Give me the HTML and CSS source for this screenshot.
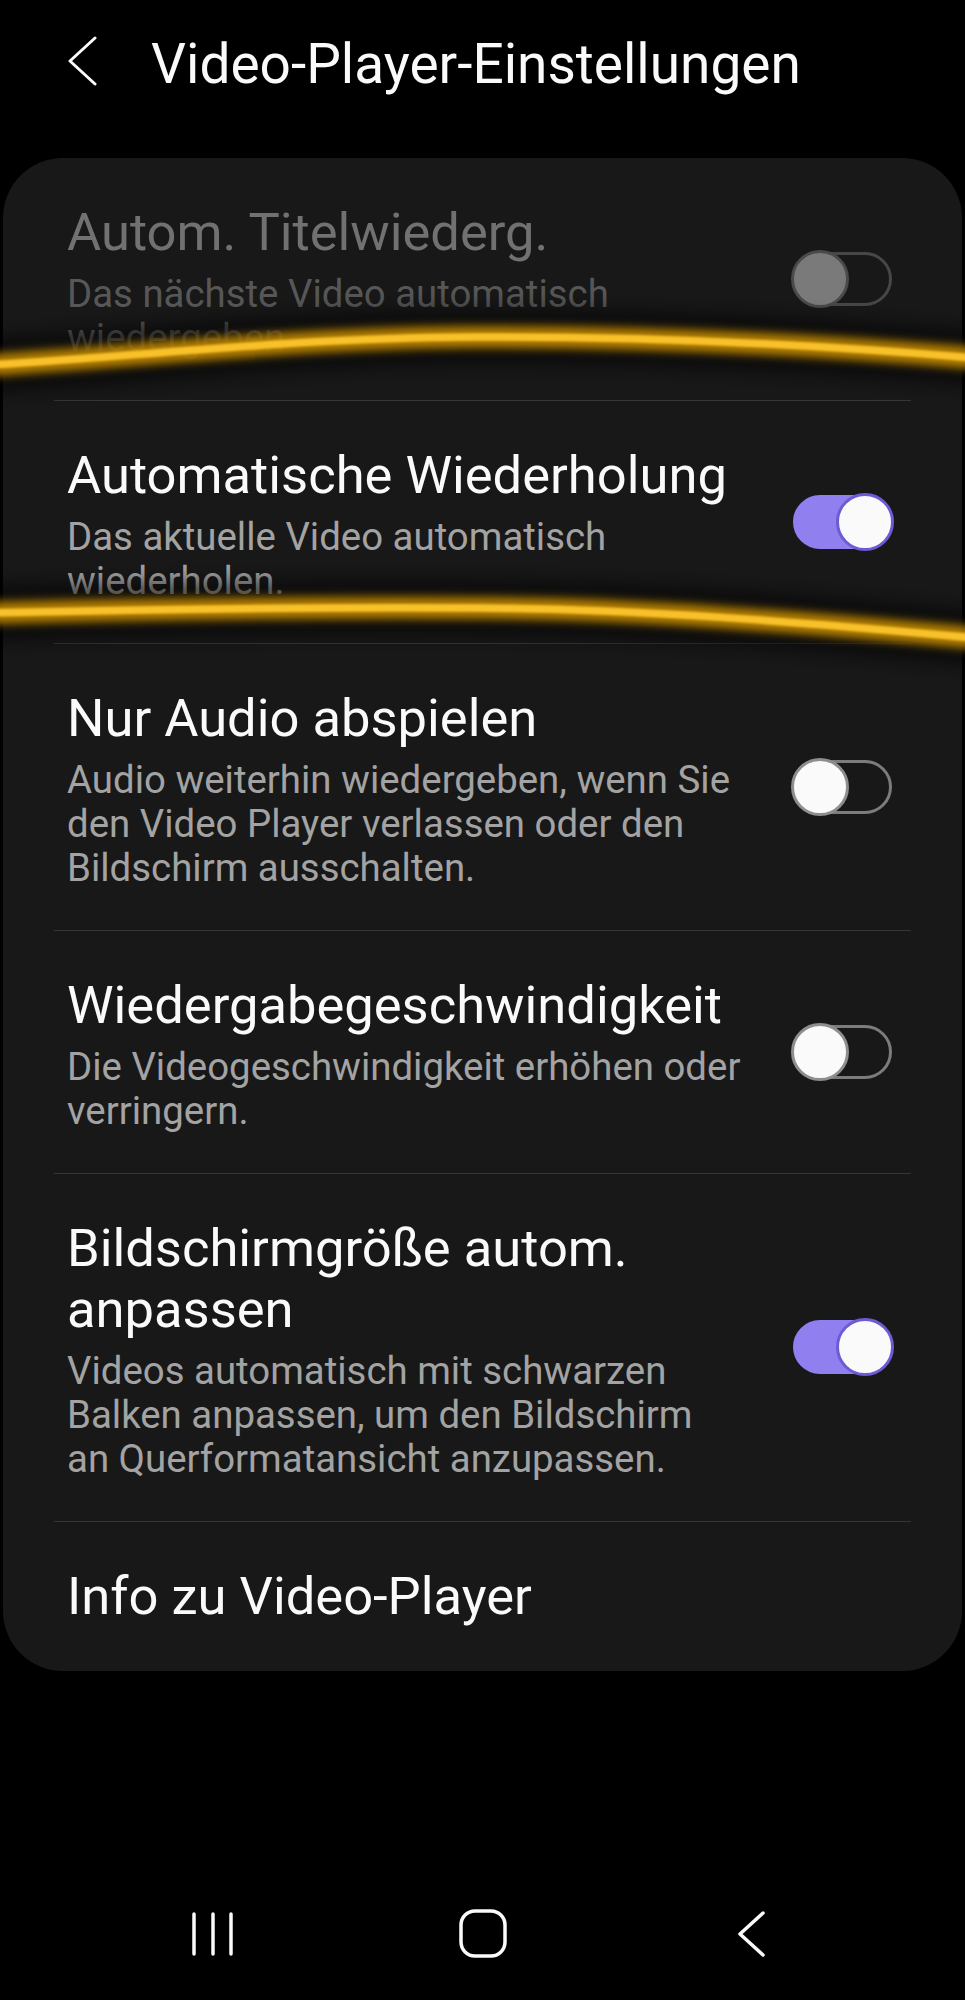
FILE: index.html
```html
<!DOCTYPE html>
<html lang="de">
<head>
<meta charset="utf-8">
<title>Video-Player-Einstellungen</title>
<link rel="stylesheet" href="styles.css">
</head>
<body>
<div class="screen">
  <header class="topbar">
    <svg class="back" width="32" height="50" viewBox="0 0 32 50" aria-hidden="true">
      <path d="M29 2 L4 25 L29 48" fill="none" stroke="#fafafa" stroke-width="3" stroke-linecap="round" stroke-linejoin="round"/>
    </svg>
    <h1 class="page-title">Video-Player-Einstellungen</h1>
  </header>

  <section class="card">
    <div class="item is-disabled">
      <div class="text">
        <div class="title">Autom. Titelwiederg.</div>
        <div class="sub">Das nächste Video automatisch wiedergeben</div>
      </div>
      <div class="switch"><span class="knob"></span></div>
    </div>
    <div class="item">
      <div class="text">
        <div class="title">Automatische Wiederholung</div>
        <div class="sub">Das aktuelle Video automatisch wiederholen.</div>
      </div>
      <div class="switch is-on"><span class="knob"></span></div>
    </div>
    <div class="item">
      <div class="text">
        <div class="title">Nur Audio abspielen</div>
        <div class="sub">Audio weiterhin wiedergeben, wenn Sie den Video Player verlassen oder den Bildschirm ausschalten.</div>
      </div>
      <div class="switch"><span class="knob"></span></div>
    </div>
    <div class="item">
      <div class="text">
        <div class="title">Wiedergabegeschwindigkeit</div>
        <div class="sub">Die Videogeschwindigkeit erhöhen oder verringern.</div>
      </div>
      <div class="switch"><span class="knob"></span></div>
    </div>
    <div class="item">
      <div class="text">
        <div class="title">Bildschirmgröße autom. anpassen</div>
        <div class="sub">Videos automatisch mit schwarzen Balken anpassen, um den Bildschirm <span class="keep">an Querformatansicht</span> anzupassen.</div>
      </div>
      <div class="switch is-on"><span class="knob"></span></div>
    </div>
    <div class="item">
      <div class="text">
        <div class="title">Info zu Video-Player</div>
      </div>
    </div>
  </section>

  <div class="spacer"></div>

  <nav class="navbar">
    <svg class="nav-icon" width="60" height="60" viewBox="0 0 60 60" aria-hidden="true">
      <g stroke="#fafafa" stroke-width="3.5" stroke-linecap="round">
        <line x1="11" y1="10" x2="11" y2="50"/>
        <line x1="30" y1="10" x2="30" y2="50"/>
        <line x1="48" y1="10" x2="48" y2="50"/>
      </g>
    </svg>
    <svg class="nav-icon" width="60" height="60" viewBox="0 0 60 60" aria-hidden="true">
      <rect x="8" y="7" width="44" height="45" rx="14" ry="14" fill="none" stroke="#fafafa" stroke-width="3.5"/>
    </svg>
    <svg class="nav-icon" width="60" height="60" viewBox="0 0 60 60" aria-hidden="true">
      <path d="M40 9 L17 30 L40 51" fill="none" stroke="#fafafa" stroke-width="3.5" stroke-linecap="round" stroke-linejoin="round"/>
    </svg>
  </nav>

  <svg class="marks" width="965" height="700" viewBox="0 0 965 700" aria-hidden="true">
    <defs>
      <filter id="soft" x="-10%" y="-200%" width="120%" height="500%">
        <feGaussianBlur stdDeviation="10"/>
      </filter>
      <filter id="glow" x="-10%" y="-200%" width="120%" height="500%">
        <feGaussianBlur stdDeviation="5"/>
      </filter>
      <filter id="core" x="-10%" y="-200%" width="120%" height="500%">
        <feGaussianBlur stdDeviation="0.9"/>
      </filter>
    </defs>
    <g fill="none" stroke-linecap="round">
      <path d="M-10,365 C150,355 300,338 470,337 C640,336 820,345 975,358" stroke="#000" stroke-opacity="0.6" stroke-width="54" filter="url(#soft)"/>
      <path d="M-10,365 C150,355 300,338 470,337 C640,336 820,345 975,358" stroke="#c98e07" stroke-opacity="0.9" stroke-width="22" filter="url(#glow)"/>
      <path d="M-10,365 C150,355 300,338 470,337 C640,336 820,345 975,358" stroke="#f8c12c" stroke-width="7.5" filter="url(#core)"/>

      <path d="M-10,613 C150,609 300,607 480,608 C640,609 800,622 975,638" stroke="#000" stroke-opacity="0.6" stroke-width="54" filter="url(#soft)"/>
      <path d="M-10,613 C150,609 300,607 480,608 C640,609 800,622 975,638" stroke="#c98e07" stroke-opacity="0.9" stroke-width="22" filter="url(#glow)"/>
      <path d="M-10,613 C150,609 300,607 480,608 C640,609 800,622 975,638" stroke="#f8c12c" stroke-width="7.5" filter="url(#core)"/>
    </g>
  </svg>
</div>
</body>
</html>
```

FILE: styles.css
```css
* {
  box-sizing: border-box;
}

html, body {
  margin: 0;
  padding: 0;
  background: #000;
}

body {
  font-family: Roboto, "Noto Sans", "Liberation Sans", sans-serif;
  color: #fafafa;
}

.screen {
  position: relative;
  width: 965px;
  height: 2000px;
  display: flex;
  flex-direction: column;
  overflow: hidden;
}

.topbar {
  height: 158px;
  padding: 33px 0 0 66px;
  display: flex;
  align-items: flex-start;
  gap: 53px;
}

.back {
  margin-top: 3px;
  flex: none;
}

.page-title {
  margin: 0;
  font-size: 55px;
  line-height: 62px;
  font-weight: 400;
  letter-spacing: 0;
  color: #fafafa;
}

.card {
  margin: 0 3px;
  padding: 0 51px;
  background: #181818;
  border-radius: 60px;
}

.item {
  display: flex;
  align-items: center;
  gap: 48px;
  padding: 44px 19px 40px 13px;
  border-bottom: 1px solid #363636;
}

.item:last-child {
  border-bottom: none;
  padding-bottom: 44px;
}

.text {
  flex: 1;
  min-width: 0;
}

.title {
  font-size: 52.5px;
  line-height: 61px;
  color: #fafafa;
}

.sub {
  margin-top: 9px;
  font-size: 38.4px;
  line-height: 44px;
  color: #a3a3a3;
}

.keep {
  white-space: nowrap;
}

.is-disabled .title {
  color: #717171;
}

.is-disabled .sub {
  color: #575757;
}

.switch {
  flex: none;
  width: 99px;
  height: 54px;
  margin-bottom: 5px;
  border: 3px solid #7c7c7c;
  border-radius: 27px;
  display: flex;
  align-items: center;
  justify-content: flex-start;
}

.knob {
  width: 58px;
  height: 58px;
  margin: -5px;
  border-radius: 50%;
  background: #fafafa;
  border: 3px solid #8e8e8e;
  flex: none;
}

.switch.is-on {
  background: #8f7fef;
  border-color: #8f7fef;
  justify-content: flex-end;
}

.switch.is-on .knob {
  border-color: #6d5bd6;
}

.is-disabled .switch {
  border-color: #474747;
}

.is-disabled .knob {
  background: #7a7a7a;
  border-color: #4a4a4a;
}

.spacer {
  flex: 1;
}

.navbar {
  height: 132px;
  display: flex;
  justify-content: center;
  align-items: center;
  gap: 210px;
}

.nav-icon {
  flex: none;
}

.marks {
  position: absolute;
  left: 0;
  top: 0;
  pointer-events: none;
}
```
